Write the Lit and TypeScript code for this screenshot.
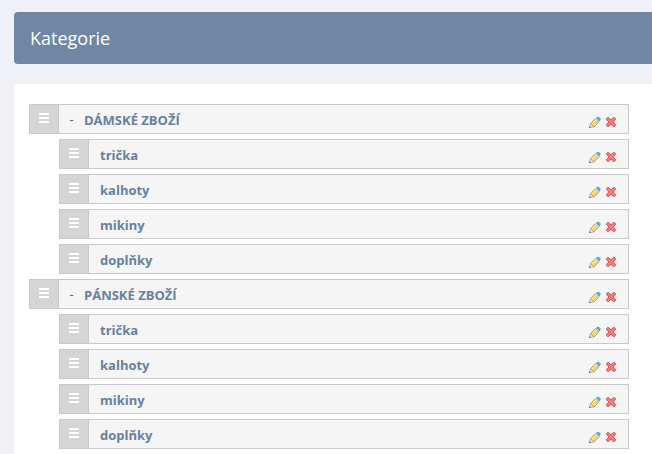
import { LitElement, html, css } from "lit";
import { customElement, property } from "lit/decorators.js";

interface Category {
  name: string;
  children: string[];
}

const categories: Category[] = [
  { name: "DÁMSKÉ ZBOŽÍ", children: ["trička", "kalhoty", "mikiny", "doplňky"] },
  { name: "PÁNSKÉ ZBOŽÍ", children: ["trička", "kalhoty", "mikiny", "doplňky"] },
];

@customElement("category-row")
export class CategoryRow extends LitElement {
  @property() name = "";
  @property({ type: Boolean }) parent = false;

  static styles = css`
    :host {
      display: block;
    }
    .row {
      display: flex;
      box-sizing: border-box;
      height: 30px;
      border: 1px solid #c9c9c9;
      background: #f5f5f5;
    }
    button {
      margin: 0;
      padding: 0;
      border: 0;
      background: none;
      font: inherit;
      color: inherit;
      cursor: pointer;
    }
    .handle {
      flex: none;
      box-sizing: border-box;
      width: 29px;
      padding: 0 0 2px;
      display: flex;
      align-items: center;
      justify-content: center;
      background: #d5d5d5;
      border-right: 1px solid #c9c9c9;
      cursor: move;
    }
    .bars {
      width: 10px;
      height: 10px;
    }
    .toggle {
      flex: none;
      width: 25px;
      text-align: center;
      color: #566270;
      font-size: 13px;
      line-height: 28px;
    }
    .name {
      flex: 1;
      min-width: 0;
      padding-left: 11px;
      font-size: 13px;
      font-weight: 700;
      line-height: 30px;
      color: #6681a0;
      text-decoration: none;
    }
    .toggle + .name {
      padding-left: 0;
    }
    .actions {
      flex: none;
      display: flex;
      align-items: flex-end;
      padding: 0 9px 3px 0;
    }
    .action {
      width: 16px;
      height: 16px;
    }
    .icon {
      display: block;
      width: 16px;
      height: 16px;
    }
  `;

  render() {
    return html`
      <div class="row">
        <button class="handle" aria-label="Přesunout ${this.name}">
          <svg class="bars" viewBox="0 0 10 10" fill="#fff" aria-hidden="true">
            <path d="M0 0h10v2H0zM0 4h10v2H0zM0 8h10v2H0z" />
          </svg>
        </button>
        ${this.parent
          ? html`<button class="toggle" aria-label="Sbalit ${this.name}">-</button>`
          : ""}
        <a class="name" href="#">${this.name}</a>
        <div class="actions">
          <button class="action" aria-label="Upravit ${this.name}">
            <svg class="icon" viewBox="0 0 16 16" aria-hidden="true">
              <path d="M3.500 9.500l5-5 3.500 3.500-5 5z" fill="#f0d478" stroke="#b39a5c" stroke-width=".8" />
              <path d="M4.800 10.200l4.700-4.700" stroke="#fbeaa8" stroke-width="1" />
              <path d="M2.400 13.600l1.100-4.100L7 13z" fill="#e6e0d8" stroke="#a39c96" stroke-width=".7" />
              <path d="M2 14v-2l2 2z" fill="#777" />
              <path d="M8.500 4.500l1-1L13 7l-1 1z" fill="#d3dfe2" />
              <path d="M9.500 4l.6-.6h1.900l1 1v1.900l-.6.600z" fill="#4cbbe0" stroke="#3596ba" stroke-width=".8" />
            </svg>
          </button>
          <button class="action" aria-label="Smazat ${this.name}">
            <svg class="icon" viewBox="0 0 16 16" aria-hidden="true">
              <path
                d="M4.500 3.500h1.200L8 6l2.300-2.500h1.200l1 1v1.200L10 8l2.500 2.300v1.200l-1 1h-1.200L8 10l-2.300 2.500H4.500l-1-1v-1.200L6 8 3.500 5.700V4.500z"
                fill="#f27d7d" stroke="#cf5a5c" stroke-width="1" stroke-linejoin="round" />
            </svg>
          </button>
        </div>
      </div>
    `;
  }
}

@customElement("app-root")
export class AppRoot extends LitElement {
  static styles = css`
    :host {
      display: flex;
      flex-direction: column;
      gap: 20px;
      box-sizing: border-box;
      min-height: 100vh;
      padding: 12px 0 0 14px;
      background: #eff1f7;
      font-family: "Open Sans", sans-serif;
    }
    .header {
      padding: 0 16px;
      border-radius: 4px 0 0 4px;
      background: #7087a3;
    }
    .title {
      margin: 0;
      font-size: 18px;
      font-weight: 400;
      line-height: 52px;
      color: #fff;
    }
    .panel {
      flex: 1;
      padding: 20px 23px 0 15px;
      border-radius: 4px 0 0 0;
      background: #fff;
    }
    .list {
      margin: 0;
      padding: 0;
      list-style: none;
    }
    .list .list {
      padding-left: 30px;
    }
    .row {
      display: block;
      margin-bottom: 5px;
    }
  `;

  render() {
    return html`
      <header class="header"><h1 class="title">Kategorie</h1></header>
      <main class="panel">
        <ul class="list">
          ${categories.map(
            (category) => html`
              <li>
                <category-row class="row" parent .name=${category.name}></category-row>
                <ul class="list">
                  ${category.children.map(
                    (child) => html`<li><category-row class="row" .name=${child}></category-row></li>`,
                  )}
                </ul>
              </li>
            `,
          )}
        </ul>
      </main>
    `;
  }
}
